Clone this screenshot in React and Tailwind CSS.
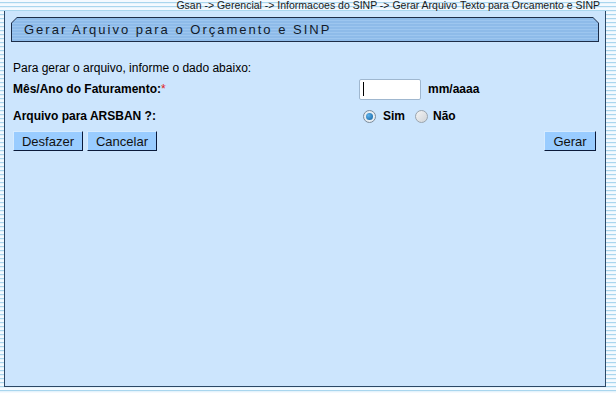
export default function App() {
  return (
    <div className="w-[616px] h-[393px] overflow-hidden bg-[repeating-linear-gradient(to_bottom,#f4faff_0px,#f4faff_2px,#a9d6ee_2px,#a9d6ee_3px,#e6f3fb_3px,#e6f3fb_4px)] font-['Liberation_Sans',Arial,sans-serif] text-black">
      <div className="h-[11px] flex justify-end pr-[16px] text-[10.5px] leading-[10px] text-[#1a1a1a] whitespace-nowrap">
        Gsan -&gt; Gerencial -&gt; Informacoes do SINP -&gt; Gerar Arquivo Texto para Orcamento e SINP
      </div>
      <div className="ml-[4px] w-[602px] h-[376px] bg-[#cce5fd] border-x border-b border-[#2b4866] pt-[6px]">
        <div className="mx-[6px] h-[25px] bg-[#1c2d48] p-px [clip-path:polygon(6px_0,calc(100%-6px)_0,100%_6px,100%_100%,0_100%,0_6px)]">
          <div className="h-full bg-[repeating-linear-gradient(to_bottom,#8ebbe9_0px,#8ebbe9_2px,#9dc6ef_2px,#9dc6ef_3px)] [clip-path:polygon(5px_0,calc(100%-5px)_0,100%_5px,100%_100%,0_100%,0_5px)] flex items-center pl-[12px] text-[13px] tracking-[2px] text-[#111a2a]">
            Gerar Arquivo para o Orçamento e SINP
          </div>
        </div>
        <div className="px-[8px] pt-[19px] text-[12px]">
          <div className="h-[14px] leading-[14px]">Para gerar o arquivo, informe o dado abaixo:</div>
          <div className="flex items-center h-[24px] mt-[2px]">
            <div className="w-[346px] font-bold">
              Mês/Ano do Faturamento:<span className="text-[#e02020] font-normal">*</span>
            </div>
            <div className="w-[62px] h-[21px] bg-white border border-[#9fb7cf] rounded-[2px] flex items-center pl-[3px]">
              <div className="w-px h-[14px] bg-black"></div>
            </div>
            <div className="ml-[7px] font-bold">mm/aaaa</div>
          </div>
          <div className="flex items-center h-[24px] mt-[3px]">
            <div className="w-[350px] font-bold">Arquivo para ARSBAN ?:</div>
            <div className="w-[13px] h-[13px] rounded-full border border-[#7a8a9a] bg-[#e8eef3] flex items-center justify-center">
              <div className="w-[7px] h-[7px] rounded-full bg-[radial-gradient(circle_at_35%_35%,#5fb3ec,#0f5f9e)]"></div>
            </div>
            <div className="ml-[7px] font-bold">Sim</div>
            <div className="ml-[10px] w-[13px] h-[13px] rounded-full border border-[#9aa4ad] bg-[linear-gradient(135deg,#f4f4f4,#d0d4d8)]"></div>
            <div className="ml-[5px] font-bold">Não</div>
          </div>
          <div className="flex items-center mt-[3px]">
            <button className="h-[20px] w-[70px] bg-[#99ccff] border border-t-[#d6ebff] border-l-[#d6ebff] border-b-[#0a1a3a] border-r-[#0a1a3a] text-[13px] leading-none text-[#111]">Desfazer</button>
            <button className="ml-[4px] h-[20px] w-[70px] bg-[#99ccff] border border-t-[#d6ebff] border-l-[#d6ebff] border-b-[#0a1a3a] border-r-[#0a1a3a] text-[13px] leading-none text-[#111]">Cancelar</button>
            <div className="flex-1"></div>
            <button className="mr-[1px] h-[20px] w-[52px] bg-[#99ccff] border border-t-[#d6ebff] border-l-[#d6ebff] border-b-[#0a1a3a] border-r-[#0a1a3a] text-[13px] leading-none text-[#111]">Gerar</button>
          </div>
        </div>
      </div>
    </div>
  );
}
